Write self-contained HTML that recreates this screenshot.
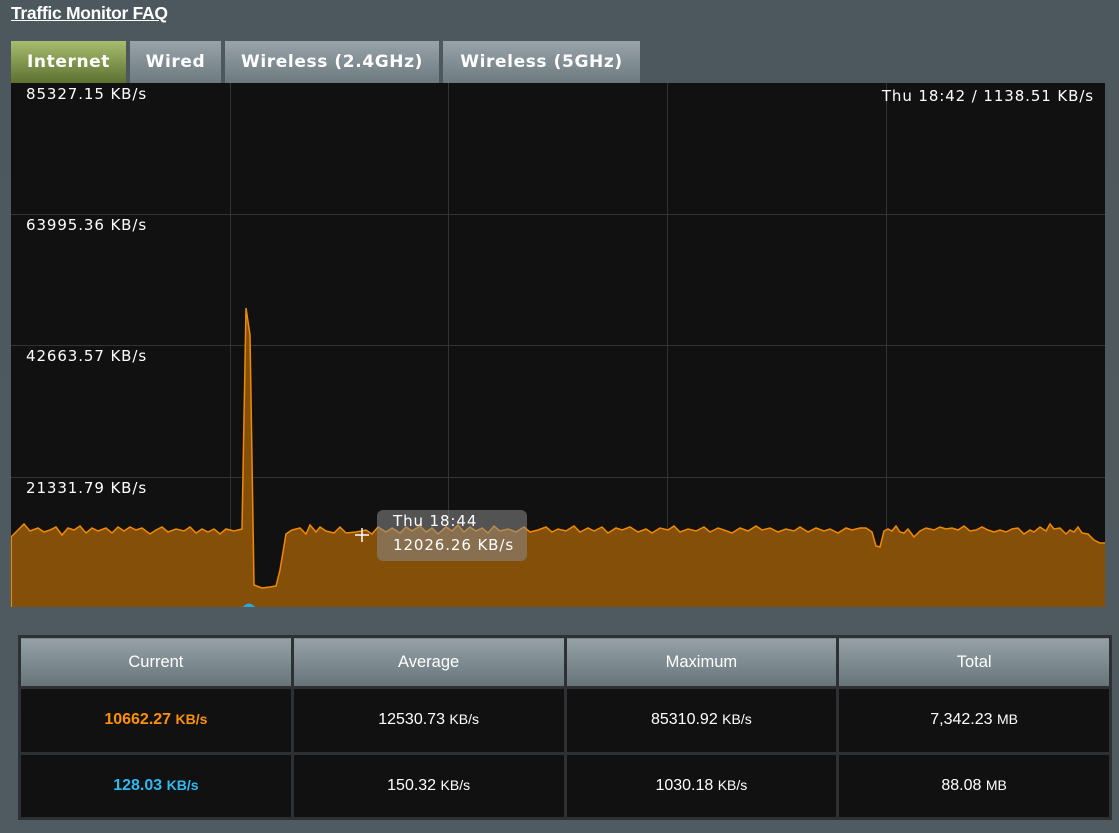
<!DOCTYPE html>
<html><head><meta charset="utf-8"><style>
*{margin:0;padding:0;box-sizing:border-box}
body{width:1119px;height:833px;background:linear-gradient(#4c585e,#4f5b60);font-family:"Liberation Sans",sans-serif;position:relative;overflow:hidden}
.faq{position:absolute;left:11px;top:3px;color:#fff;font-weight:bold;font-size:17.5px;letter-spacing:-0.3px;text-decoration:underline}
.tab{position:absolute;top:41px;height:42px;color:#fff;font-family:"DejaVu Sans",sans-serif;font-weight:bold;font-size:17px;letter-spacing:0.6px;line-height:42px;text-align:center;background:linear-gradient(#98a4a9,#6c7a80)}
.tab.on{background:linear-gradient(#a9bd6f,#5c7130)}
.lbl{position:absolute;color:#fff;font-family:"DejaVu Sans",sans-serif;font-size:15px;letter-spacing:0.9px;white-space:nowrap}
table{position:absolute;left:18px;top:635px;width:1094px;height:185px;border-collapse:collapse;background:#111;border:2px solid #2a2e30;table-layout:fixed}
td,th{border:3px solid #2d3133;text-align:center;color:#fff;font-size:16px;font-weight:normal}
th{height:51px;background:linear-gradient(#95a1a6,#66747a);font-size:16.5px}
td small{font-size:14px}
</style></head><body>
<div class="faq">Traffic Monitor FAQ</div>
<div class="tab on" style="left:11px;width:115px">Internet</div>
<div class="tab" style="left:130px;width:91px">Wired</div>
<div class="tab" style="left:225px;width:214px">Wireless (2.4GHz)</div>
<div class="tab" style="left:443px;width:197px">Wireless (5GHz)</div>
<svg style="position:absolute;left:11px;top:83px" width="1094" height="524" viewBox="11 83 1094 524">
<rect x="11" y="83" width="1094" height="524" fill="#111"/>
<g stroke="#333" stroke-width="1"><line x1="230.5" y1="83" x2="230.5" y2="607"/><line x1="448.5" y1="83" x2="448.5" y2="607"/><line x1="667.5" y1="83" x2="667.5" y2="607"/><line x1="886.5" y1="83" x2="886.5" y2="607"/><line x1="11" y1="214.5" x2="1105" y2="214.5"/><line x1="11" y1="345.5" x2="1105" y2="345.5"/><line x1="11" y1="477.5" x2="1105" y2="477.5"/></g>
<defs><path id="ln" d="M11,537 18,530 24,524 30,531 38,528 44,532 50,530 56,527 62,535 68,528 74,530 80,526 86,533 92,528 98,531 106,528 112,533 118,527 124,531 130,527 136,530 142,528 150,534 156,530 162,527 168,532 176,529 184,531 190,527 196,533 202,529 208,532 214,529 220,534 226,529 234,531 242,529 246,308 250,335 254,585 262,588 270,587 276,586 280,570 286,534 292,530 300,528 306,534 310,525 316,532 320,527 326,531 334,533 340,527 346,533 356,532 366,530 372,534 378,527 386,532 392,528 400,533 406,527 412,531 420,526 426,532 432,528 438,534 446,527 452,531 458,525 464,532 470,527 476,531 482,528 488,533 494,526 500,531 508,529 516,532 524,527 530,532 538,530 546,527 552,532 558,529 566,531 574,526 580,532 588,528 594,531 602,527 608,533 616,528 622,530 630,527 638,532 646,529 652,533 660,528 668,530 674,526 680,532 688,529 696,531 704,527 710,532 718,528 724,530 732,533 740,528 748,531 756,526 762,530 770,528 778,532 786,529 794,531 800,527 808,532 816,528 824,531 830,529 838,533 846,528 852,530 860,528 866,528 872,532 876,546 880,547 884,531 888,529 892,531 896,526 900,532 904,533 908,529 914,537 920,531 926,528 930,529 934,530 940,527 946,529 952,528 958,530 964,526 970,531 976,530 982,527 988,530 994,532 1000,530 1006,532 1012,529 1018,528 1024,534 1030,530 1034,532 1040,527 1046,531 1050,524 1054,529 1060,528 1066,534 1070,530 1074,532 1078,527 1082,533 1088,534 1094,540 1100,543 1105,543"/></defs>
<path fill="#844f09" d="M11,607 L11,537 18,530 24,524 30,531 38,528 44,532 50,530 56,527 62,535 68,528 74,530 80,526 86,533 92,528 98,531 106,528 112,533 118,527 124,531 130,527 136,530 142,528 150,534 156,530 162,527 168,532 176,529 184,531 190,527 196,533 202,529 208,532 214,529 220,534 226,529 234,531 242,529 246,308 250,335 254,585 262,588 270,587 276,586 280,570 286,534 292,530 300,528 306,534 310,525 316,532 320,527 326,531 334,533 340,527 346,533 356,532 366,530 372,534 378,527 386,532 392,528 400,533 406,527 412,531 420,526 426,532 432,528 438,534 446,527 452,531 458,525 464,532 470,527 476,531 482,528 488,533 494,526 500,531 508,529 516,532 524,527 530,532 538,530 546,527 552,532 558,529 566,531 574,526 580,532 588,528 594,531 602,527 608,533 616,528 622,530 630,527 638,532 646,529 652,533 660,528 668,530 674,526 680,532 688,529 696,531 704,527 710,532 718,528 724,530 732,533 740,528 748,531 756,526 762,530 770,528 778,532 786,529 794,531 800,527 808,532 816,528 824,531 830,529 838,533 846,528 852,530 860,528 866,528 872,532 876,546 880,547 884,531 888,529 892,531 896,526 900,532 904,533 908,529 914,537 920,531 926,528 930,529 934,530 940,527 946,529 952,528 958,530 964,526 970,531 976,530 982,527 988,530 994,532 1000,530 1006,532 1012,529 1018,528 1024,534 1030,530 1034,532 1040,527 1046,531 1050,524 1054,529 1060,528 1066,534 1070,530 1074,532 1078,527 1082,533 1088,534 1094,540 1100,543 1105,543 L1105,607 Z"/>
<use href="#ln" fill="none" stroke="#f08a00" stroke-width="1.5"/>
<path d="M243,607 Q249,600 255,607" fill="#29a7d6"/>
<line x1="11.5" y1="537" x2="11.5" y2="607" stroke="#f08a00" stroke-width="1"/>
<g stroke="#fff" stroke-width="1.5"><line x1="355" y1="535" x2="369" y2="535"/><line x1="362" y1="528" x2="362" y2="542"/></g>
<rect x="377" y="510" width="150" height="51" rx="6" fill="#8a8a8a" fill-opacity="0.55"/>
</svg>
<div class="lbl" style="left:26px;top:85px">85327.15 KB/s</div>
<div class="lbl" style="left:26px;top:216px">63995.36 KB/s</div>
<div class="lbl" style="left:26px;top:347px">42663.57 KB/s</div>
<div class="lbl" style="left:26px;top:479px">21331.79 KB/s</div>
<div class="lbl" style="right:25px;top:87px">Thu 18:42 / 1138.51 KB/s</div>
<div class="lbl" style="left:393px;top:512px">Thu 18:44</div>
<div class="lbl" style="left:393px;top:536px">12026.26 KB/s</div>
<table>
<tr><th>Current</th><th>Average</th><th>Maximum</th><th>Total</th></tr>
<tr><td style="color:#ff9000;font-weight:bold">10662.27 <small>KB/s</small></td><td>12530.73 <small>KB/s</small></td><td>85310.92 <small>KB/s</small></td><td>7,342.23 <small>MB</small></td></tr>
<tr><td style="color:#31b9f0;font-weight:bold">128.03 <small>KB/s</small></td><td>150.32 <small>KB/s</small></td><td>1030.18 <small>KB/s</small></td><td>88.08 <small>MB</small></td></tr>
</table>
</body></html>
